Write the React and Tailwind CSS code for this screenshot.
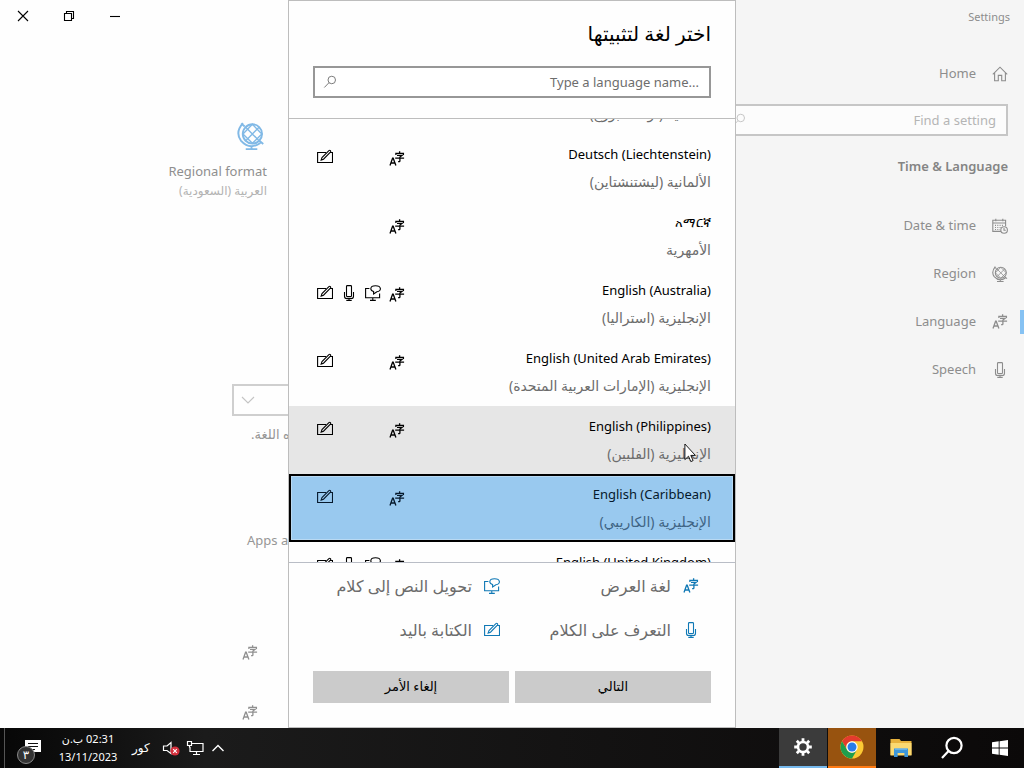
import React from "react";

const FONT = "font-['Noto_Sans','DejaVu_Sans',sans-serif]";

function Icon({ children, box = "0 0 16 16", className = "size-4" }) {
  return (
    <svg viewBox={box} className={className} fill="none" stroke="currentColor" strokeWidth="1.1" aria-hidden="true">
      {children}
    </svg>
  );
}

function DisplayIcon({ className }) {
  return (
    <Icon className={className}>
      <path strokeWidth="1.3" d="M1 14.5 3.6 7.2h.6l2.7 7.3M1.9 12h4.2" />
      <path strokeWidth="1.3" d="M10.6.3v1.6M6.9 4V2.3h7.5V4M8 4.4h5L10.9 6v3.9q0 .9-1.8.7M6.2 7.2h8.9" />
    </Icon>
  );
}

function PenIcon({ className }) {
  return (
    <Icon className={className}>
      <path d="M9 3.5H.6v10h14.9v-10H13" />
      <path d="M4.2 11 5 8.6l6.9-7q.8-.7 1.5 0t0 1.5L6.5 10.2Z" />
    </Icon>
  );
}

function MicIcon({ className }) {
  return (
    <Icon className={className}>
      <rect x="5.5" y=".6" width="5" height="11" rx=".8" />
      <path d="M3.5 7v4.2q0 2.3 2.3 2.3h4.4q2.3 0 2.3-2.3V7M8 13.5v2M5.3 15.4h5.4" />
    </Icon>
  );
}

function SpeechOutIcon({ className }) {
  return (
    <Icon className={className}>
      <path d="M4.4 3.5H.6v9.3h14V8.5M7.8 12.8v2.5M5 15.4h5.8" />
      <path d="M8.6 9V6.5Q5.8 5.7 5.8 3.7 6 .8 10.5.8t4.9 2.9q0 2.5-3.5 3L8.6 9Z" />
    </Icon>
  );
}

function SearchIcon({ className }) {
  return (
    <Icon className={className}>
      <circle cx="10" cy="5.7" r="4.3" />
      <path d="M6.9 8.7 1.5 14.3" />
    </Icon>
  );
}

function HomeIcon() {
  return (
    <Icon>
      <path d="M.8 8.4 8 1.2l7.2 7.2M2.6 6.8v8h3.7V9.4h3.4v5.4h3.7v-8" />
    </Icon>
  );
}

function CalendarIcon() {
  return (
    <Icon>
      <path d="M9 13.4H.8V2.2h12.8v6M.8 5h12.8M3.8.8v2.4M10.8.8v2.4" />
      <path strokeDasharray="1 1.3" d="M3 7.4h8M3 9.5h6M3 11.5h5" />
      <circle cx="12.1" cy="12" r="3.3" />
      <path d="M12 10v2.2h1.8" />
    </Icon>
  );
}

function GlobeIcon({ className }) {
  return (
    <Icon className={className}>
      <circle cx="8.8" cy="6.8" r="5.5" />
      <path d="M3.4.6q-4.6 5.2-1.2 10 5 5.6 11.2 1.4M2.4.8l2 1.8M12.6 10.6l2.4 2M8.3 13.4v2.1M5 15.5h6.6" />
      <path d="M5 3l7.6 7.7M12.6 3 5 10.7M8.8 1.3 3.4 6.8l5.4 5.4 5.4-5.4Z" strokeWidth=".8" />
    </Icon>
  );
}

const LANGUAGES = [
  { name: "Deutsch (Luxemburg)", ar: "الألمانية (لوكسمبورغ)", pen: true },
  { name: "Deutsch (Liechtenstein)", ar: "الألمانية (ليشتنشتاين)", pen: true },
  { name: "አማርኛ", ar: "الأمهرية" },
  { name: "English (Australia)", ar: "الإنجليزية (استراليا)", pen: true, voice: true },
  { name: "English (United Arab Emirates)", ar: "الإنجليزية (الإمارات العربية المتحدة)", pen: true },
  { name: "English (Philippines)", ar: "الإنجليزية (الفلبين)", pen: true, state: "hover" },
  { name: "English (Caribbean)", ar: "الإنجليزية (الكاريبي)", pen: true, state: "selected" },
  { name: "English (United Kingdom)", ar: "الإنجليزية (المملكة المتحدة)", pen: true, voice: true },
];

const ROW_STATE = {
  hover: "bg-[#e6e6e6] text-black",
  selected: "bg-[#99c9ef] text-[#06192c] shadow-[inset_0_0_0_2px_#000,inset_0_0_0_3px_#b9d9f2]",
};

function LanguageRow({ name, ar, pen, voice, state }) {
  return (
    <li>
      <button
        type="button"
        aria-pressed={state === "selected"}
        className={`flex h-[68px] w-full justify-between px-6 pt-1.5 ${ROW_STATE[state] || "text-black"}`}
      >
        <span className="flex flex-col items-start">
          <bdi dir="ltr" className="text-[13px] leading-7">{name}</bdi>
          <span className={`text-[14px] leading-7 ${state === "selected" ? "text-[#3f6484]" : "text-[#6c6c6c]"}`}>{ar}</span>
        </span>
        <span className="grid grid-cols-4 gap-2 pt-[9px] pl-1">
          <span className="pt-0.5"><DisplayIcon className="size-4" /></span>
          <span>{voice && <SpeechOutIcon className="size-4" />}</span>
          <span>{voice && <MicIcon className="size-4" />}</span>
          <span>{pen && <PenIcon className="size-4" />}</span>
        </span>
      </button>
    </li>
  );
}

function Legend({ icon, children }) {
  return (
    <div className="flex h-11 items-center gap-3 pr-3 text-[#0f78b5]">
      {icon}
      <span className="text-[16px] leading-6 text-[#6b6b6b]">{children}</span>
    </div>
  );
}

function LanguageDialog() {
  return (
    <section role="dialog" aria-label="اختر لغة لتثبيتها" dir="rtl" className="flex h-full w-[448px] flex-col border border-[#bdbdbd] bg-[#fefefe]">
      <header className="border-b border-[#bdbdbd] px-6 pt-[15px] pb-5">
        <h1 className="text-[20px] leading-9 text-black">اختر لغة لتثبيتها</h1>
        <div className="mt-3.5 flex h-8 items-center border-2 border-[#979797] bg-white px-2.5">
          <input
            type="text"
            dir="ltr"
            aria-label="Type a language name"
            placeholder="Type a language name..."
            className="h-6 min-w-0 flex-1 bg-transparent text-right text-[13px] outline-none placeholder:text-[#6d6d6d]"
          />
          <SearchIcon className="-ml-0.5 size-3.5 text-[#777]" />
        </div>
      </header>
      <div className="min-h-0 flex-1 overflow-hidden">
        <ul className="-mt-[53px]">
          {LANGUAGES.map((l) => <LanguageRow key={l.name} {...l} />)}
        </ul>
      </div>
      <footer className="border-t border-[#b9bdc6] px-6 pt-px pb-6">
        <div className="grid grid-cols-2 pb-[19px]">
          <Legend icon={<DisplayIcon className="size-4" />}>لغة العرض</Legend>
          <Legend icon={<SpeechOutIcon className="size-4" />}>تحويل النص إلى كلام</Legend>
          <Legend icon={<MicIcon className="size-4" />}>التعرف على الكلام</Legend>
          <Legend icon={<PenIcon className="size-4" />}>الكتابة باليد</Legend>
        </div>
        <div className="grid grid-cols-2 gap-1.5 text-[13px] text-black">
          <button type="button" className="h-8 bg-[#cbcbcb]">التالي</button>
          <button type="button" className="h-8 bg-[#cbcbcb]">إلغاء الأمر</button>
        </div>
      </footer>
    </section>
  );
}

function NavItem({ icon, label, active }) {
  return (
    <li className="relative">
      <a href="#" className="flex h-12 items-center gap-4 px-4">
        {icon}
        <span>{label}</span>
      </a>
      {active && <span className="absolute top-3 right-0 h-6 w-1 bg-[#86c2f3]" />}
    </li>
  );
}

function Sidebar() {
  return (
    <aside dir="rtl" className="w-80 shrink-0 bg-[#f5f5f5] text-[13px] text-[#8d8d8d]">
      <p className="px-3.5 pt-2 text-[11px] leading-[18px]">Settings</p>
      <nav>
        <ul className="pt-6">
          <NavItem icon={<HomeIcon />} label="Home" />
        </ul>
        <div className="mx-4 mt-1.5 flex h-8 items-center border-2 border-[#c6c6c6] bg-[#fcfcfc] px-2.5">
          <input
            type="text"
            dir="ltr"
            aria-label="Find a setting"
            placeholder="Find a setting"
            className="h-6 min-w-0 flex-1 bg-transparent text-right outline-none placeholder:text-[#b5b5b5]"
          />
          <SearchIcon className="size-3.5 text-[#c4c4c4]" />
        </div>
        <h2 className="px-4 pt-5 text-[13px] leading-5 font-semibold text-[#848484]">Time &amp; Language</h2>
        <ul className="pt-[26px]">
          <NavItem icon={<CalendarIcon />} label="Date & time" />
          <NavItem icon={<GlobeIcon className="size-4" />} label="Region" />
          <NavItem icon={<DisplayIcon className="size-4" />} label="Language" active />
          <NavItem icon={<MicIcon className="size-4" />} label="Speech" />
        </ul>
      </nav>
    </aside>
  );
}

function Content() {
  return (
    <main className="min-w-0 flex-1 bg-[#fefefe] text-[#969696]">
      <div className="flex text-black">
        <button type="button" aria-label="Close" className="flex h-8 w-[46px] items-center justify-center">
          <Icon className="size-3" box="0 0 12 12"><path d="m1 1 10 10M11 1 1 11" /></Icon>
        </button>
        <button type="button" aria-label="Restore" className="flex h-8 w-[46px] items-center justify-center">
          <Icon className="size-3" box="0 0 12 12"><path d="M1.5 3.5h7v7h-7zM3.5 3.5v-2h7v7h-2" /></Icon>
        </button>
        <button type="button" aria-label="Minimize" className="flex h-8 w-[46px] items-center justify-center">
          <Icon className="size-3" box="0 0 12 12"><path d="M1 6.5h10" /></Icon>
        </button>
      </div>
      <div dir="rtl" className="mr-auto flex w-[267px] flex-col items-start pt-[90px]">
        <GlobeIcon className="mr-0.5 size-7 text-[#81b9e6]" />
        <a href="#" className="pt-[9px] text-[13px] leading-6 text-[#8f8f8f]">Regional format</a>
        <span className="text-[12px] leading-4 text-[#b3b3b3]">العربية (السعودية)</span>
      </div>
      <div className="pt-[185px] pl-[232px]">
        <div className="flex h-8 w-72 items-center border-2 border-[#cfcfcf] px-1.5">
          <Icon className="size-4 text-[#c4c4c4]"><path d="m2 5 6 6 6-6" /></Icon>
        </div>
        <p className="pt-1.5 pl-[19px] text-[13px] leading-6 whitespace-nowrap">
          <bdi dir="rtl">تظهر الميزات بهذه اللغة.</bdi>
        </p>
        <p className="pt-[82px] pl-[15px] text-[13px] leading-6 whitespace-nowrap">Apps and websites</p>
        <div className="flex flex-col gap-11 pt-[93px] pl-2.5 text-[#909090]">
          <DisplayIcon className="size-4" />
          <DisplayIcon className="size-4" />
        </div>
      </div>
    </main>
  );
}

function GearIcon() {
  return (
    <svg viewBox="0 0 20 20" className="size-5" fill="none" stroke="#fff" aria-hidden="true">
      <circle cx="10" cy="10" r="5" strokeWidth="2.6" />
      <path strokeWidth="2.8" d="M10 1.2v3M10 15.8v3M1.2 10h3M15.8 10h3M3.8 3.8l2.1 2.1M14.1 14.1l2.1 2.1M16.2 3.8l-2.1 2.1M5.9 14.1l-2.1 2.1" />
    </svg>
  );
}

function ChromeIcon() {
  return (
    <svg viewBox="0 0 24 24" className="size-6" aria-hidden="true">
      <circle cx="12" cy="12" r="11.5" fill="#fcc934" />
      <path fill="#e33b2e" d="M2 6.3A11.5 11.5 0 0 1 22 6.3H12A5.7 5.7 0 0 0 7 14.8Z" />
      <path fill="#1e9e4d" d="M2 6.3A11.5 11.5 0 0 0 12 23.5l5-8.7a5.7 5.7 0 0 1-10 0Z" />
      <circle cx="12" cy="12" r="5.7" fill="#fff" />
      <circle cx="12" cy="12" r="4.5" fill="#2a7de9" />
    </svg>
  );
}

function FolderIcon() {
  return (
    <svg viewBox="0 0 22 20" className="h-5 w-[22px]" aria-hidden="true">
      <path fill="#e8b23c" d="M.5 1h9l1.5 2h10.5v14H.5Z" />
      <path fill="#fbd971" d="M.5 5h21v12.5H.5Z" />
      <path fill="#3e97da" d="M4 10.5h14V19h-3.6v-4H7.6v4H4Z" />
      <path fill="#79bdec" d="M5 10.5h12v1.2H5Z" />
    </svg>
  );
}

function TaskButton({ label, className = "", children }) {
  return (
    <button type="button" aria-label={label} className={`flex h-full w-12 items-center justify-center ${className}`}>
      {children}
    </button>
  );
}

function Taskbar() {
  return (
    <footer className="flex h-10 shrink-0 items-center justify-between bg-linear-to-r from-[#070707] via-[#1b1b1b] via-20% to-[#0b0909] text-[12px] text-white">
      <div className="flex h-full items-center">
        <button type="button" aria-label="Notifications" className="relative ml-1 flex h-full w-14 items-center justify-center border-l border-[#555]">
          <svg viewBox="0 0 18 18" className="size-[18px]" aria-hidden="true">
            <path fill="#fff" d="M1 1h16v12H8l-4 4v-4H1Z" />
            <path stroke="#111" d="M4 4.5h10M4 7.5h10M4 10.5h7" />
          </svg>
          <span className="absolute bottom-1 left-3 flex size-[18px] items-center justify-center rounded-full border border-[#8a8a8a] bg-[#333] text-[12px]">٣</span>
        </button>
        <div className="flex w-14 flex-col items-center text-[11px] leading-[18px] whitespace-nowrap">
          <span dir="rtl">02:31 ب.ن</span>
          <span>13/11/2023</span>
        </div>
        <span className="pl-4">كور</span>
        <div className="flex items-center gap-1.5 pl-3">
          <svg viewBox="0 0 18 16" className="h-4 w-[18px]" fill="none" aria-hidden="true">
            <path stroke="#fff" strokeWidth="1.2" d="M9 13.5V2.5L5 6H1.5v4.5H5Z" />
            <circle cx="13" cy="11" r="4.6" fill="#d32f3c" />
            <path stroke="#fff" strokeWidth="1.1" d="m11.2 9.2 3.6 3.6M14.8 9.2l-3.6 3.6" />
          </svg>
          <svg viewBox="0 0 18 16" className="h-4 w-[18px]" fill="none" stroke="#fff" strokeWidth="1.2" aria-hidden="true">
            <path d="M6 3.5h11v8H4V7M10.5 11.5v3M7 14.5h7M1.5 1.5h4v4h-4zM3.5 5.5v2" />
          </svg>
          <svg viewBox="0 0 16 16" className="size-4" fill="none" stroke="#fff" strokeWidth="1.4" aria-hidden="true">
            <path d="m2.5 11 5.5-5.5 5.5 5.5" />
          </svg>
        </div>
      </div>
      <div className="flex h-full">
        <div className="mr-[3px] flex h-full gap-px">
          <TaskButton label="Settings" className="border-b-2 border-[#76b9ed] bg-[#3b3b3b]"><GearIcon /></TaskButton>
          <TaskButton label="Chrome" className="border-b-2 border-[#ff7a12] bg-[#98530f]"><ChromeIcon /></TaskButton>
          <TaskButton label="File Explorer"><FolderIcon /></TaskButton>
        </div>
        <TaskButton label="Search">
          <svg viewBox="0 0 24 24" className="size-6" fill="none" stroke="#fff" strokeWidth="2.2" aria-hidden="true">
            <circle cx="14" cy="9.5" r="7.6" />
            <path d="M8.6 15 2 22" />
          </svg>
        </TaskButton>
        <TaskButton label="Start">
          <svg viewBox="0 0 16 16" className="size-4" fill="#fff" aria-hidden="true">
            <path d="M0 2.3 6.7 1.3v6.3H0ZM7.6 1.2 16 0v7.6H7.6ZM0 8.5h6.7v6.3L0 13.8ZM7.6 8.5H16V16l-8.4-1.2Z" />
          </svg>
        </TaskButton>
      </div>
    </footer>
  );
}

export default function App() {
  return (
    <div className={`relative flex h-screen flex-col overflow-hidden ${FONT}`}>
      <div className="relative flex min-h-0 flex-1 overflow-hidden">
        <Content />
        <Sidebar />
        <div className="absolute inset-0 flex justify-center">
          <LanguageDialog />
        </div>
      </div>
      <Taskbar />
      <svg viewBox="0 0 12 20" className="pointer-events-none absolute top-[443px] left-[684px] h-5 w-3" aria-hidden="true">
        <path fill="#fff" stroke="#000" strokeWidth=".9" d="M.9 1v15.6l3.6-3.4 2.3 5.4 2.3-1-2.3-5.2h4.6Z" />
      </svg>
    </div>
  );
}
